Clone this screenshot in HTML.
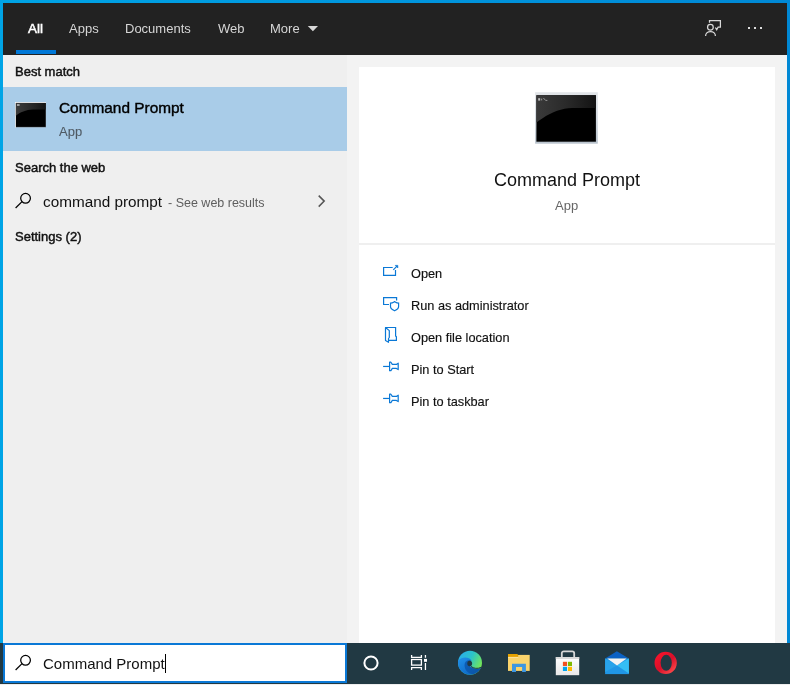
<!DOCTYPE html>
<html><head><meta charset="utf-8">
<style>
*{margin:0;padding:0;box-sizing:border-box}
html,body{width:790px;height:685px;overflow:hidden}
body{position:relative;font-family:"Liberation Sans",sans-serif;background:linear-gradient(90deg,#00a4e6 0%,#0096de 50%,#0088d5 100%)}
.abs{position:absolute}
#header{left:3px;top:3px;width:784px;height:52px;background:#222222}
#left{left:3px;top:55px;width:344px;height:588px;background:#efefef}
#right{left:347px;top:55px;width:440px;height:588px;background:#f3f3f3}
#card{left:359px;top:67px;width:416px;height:576px;background:#ffffff}
#divider{left:359px;top:243px;width:416px;height:2px;background:#efefef}
#taskbar{left:0;top:643px;width:790px;height:41px;background:#213943}
#bottomline{left:0;top:684px;width:790px;height:1px;background:#eeeeee}
#searchbox{left:3px;top:643px;width:344px;height:40px;border:2px solid #0a78d6;background:#fff}
.t{position:absolute;white-space:nowrap;line-height:1;will-change:transform}
.tab{font-size:13px;color:#d6d6d6}
.hd{font-size:13px;color:#111;-webkit-text-stroke:0.45px #111}
.mi{font-size:12.75px;color:#111;-webkit-text-stroke:0.15px #111}
svg{position:absolute;overflow:visible}
</style></head>
<body>
<div id="header" class="abs"></div>
<div id="left" class="abs"></div>
<div id="right" class="abs"></div>
<div id="card" class="abs"></div>
<div id="divider" class="abs"></div>
<div id="taskbar" class="abs"></div>
<div id="bottomline" class="abs"></div>
<div id="searchbox" class="abs"></div>

<!-- header tabs -->
<div class="t tab" style="left:28px;top:22px;color:#fff;font-size:13.5px;-webkit-text-stroke:0.5px #fff">All</div>
<div class="t tab" style="left:69.25px;top:22px">Apps</div>
<div class="t tab" style="left:125px;top:22px">Documents</div>
<div class="t tab" style="left:218px;top:22px">Web</div>
<div class="t tab" style="left:270.25px;top:22px">More</div>
<svg style="left:308px;top:26px" width="11" height="6"><path d="M-0.2 0H10L4.9 5.2Z" fill="#d8d8d8"/></svg>
<div class="abs" style="left:16px;top:50px;width:40px;height:4px;background:#0078d7"></div>

<!-- header right icons -->
<svg style="left:703px;top:18px" width="22" height="20" fill="none" stroke="#d8d8d8" stroke-width="1.25">
  <path d="M6.5 4.7V2.65H17.4V9.2H15.1L13.7 11.8L12.4 9.5"/>
  <circle cx="7.4" cy="9.2" r="2.85"/>
  <path d="M2.6 17.9C2.6 15.2 4.8 13.5 7.5 13.5S12.4 15.2 12.4 17.9"/>
</svg>
<div class="abs" style="left:748px;top:27px;width:2px;height:2px;background:#ddd"></div>
<div class="abs" style="left:754px;top:27px;width:2px;height:2px;background:#ddd"></div>
<div class="abs" style="left:760px;top:27px;width:2px;height:2px;background:#ddd"></div>

<!-- left panel -->
<div class="t hd" style="left:15px;top:65px">Best match</div>
<div class="abs" style="left:3px;top:87px;width:344px;height:64px;background:#a9cce8"></div>
<svg style="left:14px;top:101px" width="34" height="28">
 <defs><linearGradient id="gl1" x1="0" y1="0" x2="1" y2="0"><stop offset="0" stop-color="#3c3c3c"/><stop offset="0.6" stop-color="#262626"/><stop offset="1" stop-color="#141414"/></linearGradient></defs>
 <rect x="1" y="1" width="31" height="25.6" fill="#8c98a4"/>
 <rect x="1" y="1" width="31" height="1" fill="#f6f8fa"/>
 <rect x="1" y="1" width="1" height="25.6" fill="#eef2f6"/>
 <rect x="1.9" y="1.9" width="29.8" height="24" fill="#000"/>
 <path d="M1.9 1.9H31.5V8.6H19C12 8.8 6 11.5 1.9 14.8Z" fill="url(#gl1)"/>
 <rect x="3" y="3.2" width="2.6" height="1.6" fill="#bbb"/>
</svg>
<div class="t" style="left:59px;top:100px;font-size:15.4px;color:#000;-webkit-text-stroke:0.4px #000">Command Prompt</div>
<div class="t" style="left:59px;top:125px;font-size:13px;color:#4f5a64;-webkit-text-stroke:0.1px #4f5a64">App</div>
<div class="t hd" style="left:15px;top:161px">Search the web</div>
<svg style="left:14px;top:192px" width="20" height="20" fill="none" stroke="#000" stroke-width="1.25">
  <circle cx="11.55" cy="6.3" r="4.85"/>
  <path d="M8 9.6L1.6 16"/>
</svg>
<div class="t" style="left:43px;top:194px;font-size:15.3px;color:#111">command prompt</div>
<div class="t" style="left:168px;top:197px;font-size:12.5px;color:#5e5e5e">- See web results</div>
<svg style="left:317px;top:194px" width="10" height="14" fill="none" stroke="#555" stroke-width="1.5">
  <path d="M1.7 1.6L7.2 7.1L1.7 12.6"/>
</svg>
<div class="t hd" style="left:15px;top:230px">Settings (2)</div>

<!-- right card -->
<svg style="left:534px;top:91px" width="66" height="55">
 <defs>
  <linearGradient id="gl2" x1="0" y1="0" x2="1" y2="0"><stop offset="0" stop-color="#3a3a3a"/><stop offset="0.5" stop-color="#2a2a2a"/><stop offset="1" stop-color="#131313"/></linearGradient>
  <linearGradient id="fr2" x1="0" y1="0" x2="0" y2="1"><stop offset="0" stop-color="#e2e5e8"/><stop offset="0.5" stop-color="#d3dae1"/><stop offset="1" stop-color="#b9c3cd"/></linearGradient>
 </defs>
 <rect x="1.1" y="1.2" width="62.7" height="51.5" fill="url(#fr2)"/>
 <rect x="2.4" y="4.2" width="59.5" height="46.5" fill="#000"/>
 <path d="M2.4 4.2H61.9V17H38C28 17.3 18 21 9 27C6.5 28.5 4.5 30 2.4 31.5Z" fill="url(#gl2)"/>
 <rect x="4.2" y="7.2" width="2" height="2.4" fill="#bbb"/>
 <rect x="7" y="7.6" width="1.2" height="1.8" fill="#888"/>
 <path d="M9.4 7L11.6 9.4H13.4" stroke="#aaa" stroke-width="0.8" fill="none"/>
</svg>
<div class="t" style="left:494px;top:171px;font-size:18px;color:#111">Command Prompt</div>
<div class="t" style="left:555px;top:199px;font-size:13px;color:#666">App</div>

<!-- menu -->
<svg style="left:382px;top:263px" width="18" height="14" fill="none" stroke="#0a78d6" stroke-width="1.2">
  <path d="M10.7 4.5H1.6V12.4H13.5V7.1"/>
  <path d="M11.3 6.8L15 3.1"/>
  <path d="M13.3 2.4H15.8V4.9Z" fill="#0a78d6" stroke-width="0.7"/>
</svg>
<div class="t mi" style="left:411px;top:268px">Open</div>
<svg style="left:382px;top:296px" width="18" height="16" fill="none" stroke="#0a78d6" stroke-width="1.2">
  <path d="M7 8.5H1.6V1.6H14.6V4.5"/>
  <path d="M8.5 7.2C10.5 7.2 11.6 6.2 12.6 5.6C13.6 6.2 14.7 7.2 16.6 7.2V10.6C16.6 12.4 14.6 14 12.6 14.8C10.6 14 8.5 12.4 8.5 10.6Z"/>
</svg>
<div class="t mi" style="left:411px;top:300px">Run as administrator</div>
<svg style="left:383px;top:326px" width="16" height="18" fill="none" stroke="#0a78d6" stroke-width="1.2">
  <path d="M2.5 1.5H12.6V9.9L13.4 10.8V14.4H5.8"/>
  <path d="M2.5 1.5L6.3 4.6V11.5L5.5 12.5V16.3L2.5 14.6Z" stroke-linejoin="round"/>
</svg>
<div class="t mi" style="left:411px;top:332px">Open file location</div>
<svg style="left:382px;top:361px" width="18" height="12" fill="none" stroke="#0a78d6" stroke-width="1.2">
  <path d="M1.1 5.45H7.6"/>
  <path d="M7.6 1.2V9.7H8.9L10.3 7.4H14.4L16.2 8.6V2.2L14.4 3.4H10.3L8.9 1.2Z" stroke-linejoin="round"/>
</svg>
<div class="t mi" style="left:411px;top:364px">Pin to Start</div>
<svg style="left:382px;top:393px" width="18" height="12" fill="none" stroke="#0a78d6" stroke-width="1.2">
  <path d="M1.1 5.45H7.6"/>
  <path d="M7.6 1.2V9.7H8.9L10.3 7.4H14.4L16.2 8.6V2.2L14.4 3.4H10.3L8.9 1.2Z" stroke-linejoin="round"/>
</svg>
<div class="t mi" style="left:411px;top:396px">Pin to taskbar</div>

<!-- search box content -->
<svg style="left:14px;top:653px" width="20" height="20" fill="none" stroke="#000" stroke-width="1.25">
  <circle cx="11.55" cy="7.3" r="4.85"/>
  <path d="M8 10.6L1.6 17"/>
</svg>
<div class="t" style="left:43px;top:656px;font-size:15px;color:#111">Command Prompt</div>
<div class="abs" style="left:165px;top:654px;width:1px;height:19px;background:#000"></div>

<!-- taskbar icons -->
<svg style="left:362px;top:654px" width="18" height="18" fill="none" stroke="#fff" stroke-width="2"><circle cx="9" cy="9" r="6.6"/></svg>

<!-- task view -->
<svg style="left:406px;top:650px" width="26" height="26" fill="none" stroke="#fff" stroke-width="1.3">
  <path d="M5.6 4.9V7.4H15.4V4.9"/>
  <rect x="5.6" y="9.5" width="9.8" height="5.6"/>
  <path d="M5.6 20V17.7H15.4V20"/>
  <path d="M19.45 4.9V7.7M19.45 13.1V20"/>
  <rect x="18" y="8.9" width="3" height="2.9" fill="#fff" stroke="none"/>
</svg>
<!-- edge -->
<svg style="left:455px;top:648px" width="30" height="30">
 <defs>
  <linearGradient id="eg1" x1="0" y1="0" x2="1" y2="0.5"><stop offset="0" stop-color="#2aaaf2"/><stop offset="0.55" stop-color="#2cc3c8"/><stop offset="1" stop-color="#72e65a"/></linearGradient>
  <linearGradient id="eg2" x1="0" y1="0" x2="0.8" y2="1"><stop offset="0" stop-color="#2292ea"/><stop offset="1" stop-color="#0a62c0"/></linearGradient>
  <linearGradient id="eg3" x1="0" y1="0" x2="1" y2="1"><stop offset="0" stop-color="#0d5fb8"/><stop offset="1" stop-color="#0b54a6"/></linearGradient>
 </defs>
 <circle cx="15" cy="14.7" r="12" fill="url(#eg1)"/>
 <path d="M3 14.7A12 12 0 0 0 25.8 20C22 21.8 17.5 20.8 15.3 18.6C12.8 16 13.2 12.8 16.6 12.6C14.2 8.6 7 8.2 3.1 12.6Z" fill="url(#eg2)"/>
 <path d="M9.5 17C9.5 22 13 25.5 17.5 26.3C21 25.6 24 23.4 25.8 20C22 21.8 17.5 20.8 15.3 18.6C12.8 16 13.2 12.8 16.6 12.6C12.5 11.5 9.5 13.5 9.5 17Z" fill="url(#eg3)"/>
 <ellipse cx="14.7" cy="15.5" rx="2.4" ry="2.8" fill="#223842"/>
 <path d="M16 18.4C18.5 20.6 22.5 21 26.2 19.4" stroke="#223842" stroke-width="1" fill="none"/>
</svg>
<!-- explorer -->
<svg style="left:507px;top:653px" width="24" height="21">
  <rect x="1" y="1.9" width="21.7" height="16" fill="#fad46c"/>
  <path d="M1 1H10.2L11.2 2V3.9H1Z" fill="#e5a201"/>
  <rect x="1" y="3.9" width="10.2" height="1" fill="#fde3a0"/>
  <path d="M5 10.8H18.9V19H15.1V14H9V19H5Z" fill="#3e97e2"/>
</svg>
<!-- store -->
<svg style="left:555px;top:650px" width="26" height="27">
  <defs><linearGradient id="sg" x1="0" y1="0" x2="0" y2="1"><stop offset="0" stop-color="#ffffff"/><stop offset="1" stop-color="#e8e8e8"/></linearGradient></defs>
  <path d="M6.8 7V3.2C6.8 2 7.6 1.4 8.8 1.4H17.2C18.4 1.4 19.2 2 19.2 3.2V7" fill="none" stroke="#d8d8d8" stroke-width="1.8"/>
  <rect x="0.8" y="7" width="23.4" height="18.2" fill="url(#sg)"/>
  <rect x="0.8" y="7" width="23.4" height="2" fill="#d9d9d9"/>
  <rect x="7.9" y="11.8" width="4.1" height="4.2" fill="#f25022"/>
  <rect x="12.9" y="11.8" width="4.1" height="4.2" fill="#7fba00"/>
  <rect x="7.9" y="16.8" width="4.1" height="4.2" fill="#00a4ef"/>
  <rect x="12.9" y="16.8" width="4.1" height="4.2" fill="#ffb900"/>
</svg>
<!-- mail -->
<svg style="left:604px;top:651px" width="26" height="24">
  <path d="M1.1 7.6L12.9 0.3L24.9 7.6Z" fill="#0b62c4"/>
  <rect x="1.1" y="7.5" width="23.8" height="15.6" fill="#2096e6"/>
  <path d="M13 14.6L24.9 7.5V22.6Z" fill="#35bef4"/>
  <path d="M1.1 7.5L13 14.6L1.1 21Z" fill="#28a3ea"/>
  <path d="M3.2 7.5H22.6L13 14.6Z" fill="#f3f3f3"/>
</svg>
<!-- opera -->
<svg style="left:654px;top:651px" width="24" height="24">
  <defs><linearGradient id="og" x1="0.2" y1="0.1" x2="0.9" y2="0.9"><stop offset="0" stop-color="#f5132b"/><stop offset="0.5" stop-color="#d8102a"/><stop offset="1" stop-color="#ff4b4b"/></linearGradient></defs>
  <path fill-rule="evenodd" fill="url(#og)" d="M11.7 0.75A11.15 11.15 0 1 1 11.7 23.05A11.15 11.15 0 1 1 11.7 0.75ZM12.2 3.8A5.6 8 0 1 0 12.2 19.8A5.6 8 0 1 0 12.2 3.8Z"/>
</svg>
</body></html>
